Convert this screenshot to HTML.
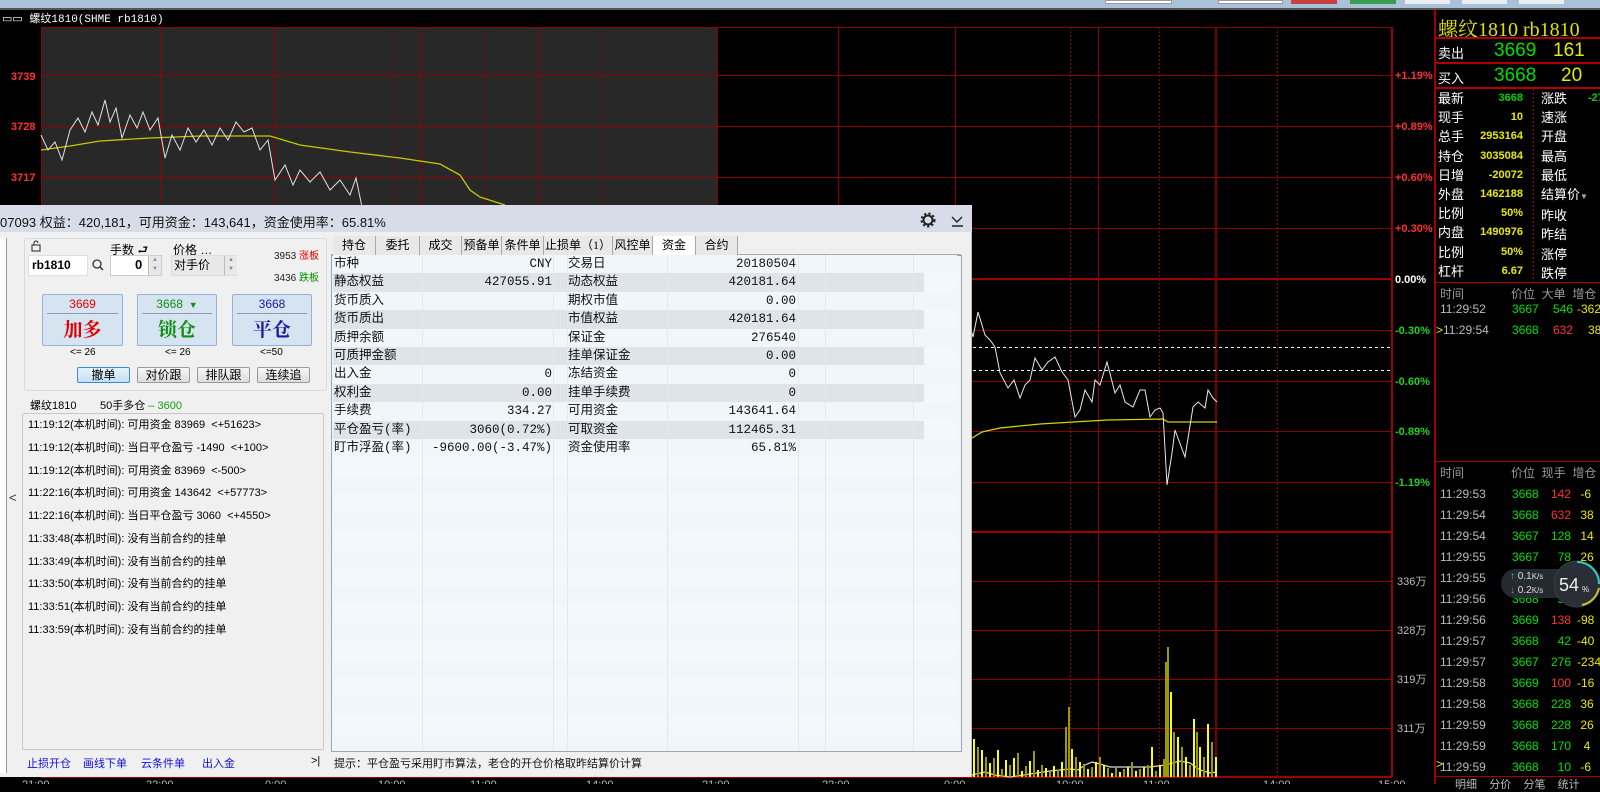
<!DOCTYPE html>
<html><head><meta charset="utf-8">
<style>
*{margin:0;padding:0;box-sizing:border-box}
body{width:1600px;height:784px;overflow:hidden;background:#000;position:relative;font-family:"Liberation Sans","Noto Sans CJK SC",sans-serif;font-size:12px}
.a{position:absolute;white-space:nowrap}
.rp{color:#fff;font-size:13px}
.btn{position:absolute;background:#d6e3f1;border:1px solid #8fb4da;border-radius:2px;text-align:center}
.btn .p{font-size:12px;height:19px;line-height:19px;border-bottom:1px solid #8a9bb0;margin:0 4px}
.btn .t{font-size:19px;line-height:30px;font-weight:bold;font-family:"Noto Serif CJK SC","Liberation Serif",serif}
.sb{position:absolute;top:367px;height:16px;border:1px solid #9a9a9a;border-radius:2px;background:linear-gradient(#f6f6f6,#dcdcdc);font-size:12px;text-align:center;line-height:14px;width:53px}
.log{position:absolute;left:28px;font-size:11px;color:#000}
.tab{position:absolute;top:236px;height:19px;border-right:1px solid #a9a9a9;background:#e8e8e8;font-size:12px;text-align:center;line-height:19px;font-family:"Liberation Serif","Noto Sans CJK SC",serif}
.row{position:absolute;left:333px;width:624px;height:18.4px}
.row span{position:absolute;top:0;line-height:18px;font-size:12.5px;font-family:"Liberation Mono","Noto Sans CJK SC",monospace;color:#111}
.tr{position:absolute;font-size:12px;font-family:"Liberation Sans",sans-serif}
</style></head><body>
<div class="a" style="left:0;top:0;width:1600px;height:8px;background:#a9c1d9"></div>
<div class="a" style="left:1105px;top:0;width:67px;height:4px;background:#fff;border:1px solid #999"></div>
<div class="a" style="left:1218px;top:0;width:65px;height:4px;background:#fff;border:1px solid #999"></div>
<div class="a" style="left:1291px;top:0;width:46px;height:4px;background:#c84040"></div>
<div class="a" style="left:1350px;top:0;width:46px;height:4px;background:#3a9a50"></div>
<div class="a" style="left:1405px;top:0;width:45px;height:4px;background:#e8eef4"></div>
<div class="a" style="left:1462px;top:0;width:45px;height:4px;background:#e8eef4"></div>
<div class="a" style="left:1519px;top:0;width:45px;height:4px;background:#e8eef4"></div>
<div class="a" style="left:0;top:8px;width:1600px;height:2px;background:#555"></div>
<div class="a" style="left:2px;top:10px;color:#fff;font-size:11px;font-family:'Liberation Mono','Noto Sans CJK SC',monospace">▭▭ 螺纹1810(SHME rb1810)</div>

<svg class="a" style="left:0;top:0" width="1600" height="784">
<rect x="41" y="27" width="676" height="180" fill="#282828"/>
<g stroke="#8b0000" stroke-width="1">
<line x1="41" y1="27.5" x2="1392" y2="27.5"/>
<line x1="41" y1="75.5" x2="1392" y2="75.5"/>
<line x1="41" y1="126.5" x2="1392" y2="126.5"/>
<line x1="41" y1="177.5" x2="1392" y2="177.5"/>
<line x1="41" y1="228.5" x2="1392" y2="228.5"/>
<line x1="41" y1="330.5" x2="1392" y2="330.5"/>
<line x1="41" y1="381.5" x2="1392" y2="381.5"/>
<line x1="41" y1="431.5" x2="1392" y2="431.5"/>
<line x1="41" y1="482.5" x2="1392" y2="482.5"/>
<line x1="41" y1="581.5" x2="1392" y2="581.5"/>
<line x1="41" y1="630.5" x2="1392" y2="630.5"/>
<line x1="41" y1="679.5" x2="1392" y2="679.5"/>
<line x1="41" y1="728.5" x2="1392" y2="728.5"/>
</g>
<g stroke="#a00000" stroke-width="2">
<line x1="41" y1="279" x2="1392" y2="279"/>
<line x1="41" y1="532" x2="1392" y2="532"/>
<line x1="41" y1="777" x2="1392" y2="777"/>
<line x1="1392" y1="27" x2="1392" y2="777"/>
</g>
<g stroke="#8b0000" stroke-width="1">
<line x1="41.5" y1="27" x2="41.5" y2="777"/>
<line x1="160.5" y1="27" x2="160.5" y2="777"/>
<line x1="275.5" y1="27" x2="275.5" y2="777"/>
<line x1="420.5" y1="27" x2="420.5" y2="777"/>
<line x1="538.5" y1="27" x2="538.5" y2="777"/>
<line x1="717.5" y1="27" x2="717.5" y2="777"/>
<line x1="838.5" y1="27" x2="838.5" y2="777"/>
<line x1="955.5" y1="27" x2="955.5" y2="777"/>
<line x1="1098.5" y1="27" x2="1098.5" y2="777"/>
</g>
<line x1="1216" y1="27" x2="1216" y2="777" stroke="#7a0000" stroke-width="2"/>
<g stroke="#8b0000" stroke-width="1" stroke-dasharray="2,2">
<line x1="392.5" y1="27" x2="392.5" y2="777"/>
<line x1="484.5" y1="27" x2="484.5" y2="777"/>
<line x1="600.5" y1="27" x2="600.5" y2="777"/>
<line x1="1070.5" y1="27" x2="1070.5" y2="777"/>
<line x1="1159.5" y1="27" x2="1159.5" y2="777"/>
<line x1="1277.5" y1="27" x2="1277.5" y2="777"/>
</g>
<g stroke="#fff" stroke-width="1" stroke-dasharray="3,3">
<line x1="955" y1="347.5" x2="1392" y2="347.5"/>
<line x1="955" y1="370.5" x2="1392" y2="370.5"/>
</g>
<polyline fill="none" stroke="#c8c800" stroke-width="1.3" points="41,150 70,146 100,141 150,138 200,136 270,136 300,145 350,152 400,158 440,164 460,175 470,190 480,197 505,205"/>
<polyline fill="none" stroke="#e0e0e0" stroke-width="1" points="41,135 48,150 55,142 62,160 70,130 78,118 85,132 92,112 98,125 105,100 110,122 116,108 122,138 130,115 137,128 143,112 150,130 158,118 165,158 172,135 180,150 188,128 196,142 204,130 212,145 220,128 228,140 236,122 244,132 252,128 260,150 268,140 275,180 285,165 293,185 300,170 310,182 320,172 330,190 340,180 350,195 356,178 362,207"/>
<polyline fill="none" stroke="#d4d400" stroke-width="1.3" points="955,430 972,438 982,432 1000,428 1040,424 1107,420 1163,419 1168,422 1217,422"/>
<polyline fill="none" stroke="#e8e8e8" stroke-width="1" points="955,306 962,300 968,318 973,337 978,312 985,335 990,340 995,347 1000,373 1008,388 1014,380 1020,398 1025,385 1030,380 1035,358 1042,370 1048,362 1055,357 1062,372 1068,380 1075,417 1080,410 1085,390 1092,402 1095,380 1100,385 1107,362 1115,393 1120,385 1125,402 1133,407 1140,390 1145,390 1150,417 1155,410 1160,408 1163,413 1167,485 1172,453 1175,430 1185,457 1193,407 1198,402 1205,408 1208,390 1213,398 1217,402"/>
<polyline fill="none" stroke="#ddd" stroke-width="1.2" points="955,775 972,775 985,772 995,775 1010,777 1030,774 1050,771 1070,769 1078,770 1085,765 1092,762 1100,764 1110,767 1130,767 1150,767 1165,765 1180,761 1190,763 1200,770 1210,773 1217,772"/>
<g font-family="Liberation Sans" font-size="11" fill="#ff3030" font-weight="bold">
<text x="11" y="80">3739</text><text x="11" y="130">3728</text><text x="11" y="181">3717</text>
</g>
<g font-family="Liberation Sans" font-size="11" font-weight="bold">
<text x="1395" y="79" fill="#ff3030">+1.19%</text>
<text x="1395" y="130" fill="#ff3030">+0.89%</text>
<text x="1395" y="181" fill="#ff3030">+0.60%</text>
<text x="1395" y="232" fill="#ff3030">+0.30%</text>
<text x="1395" y="283" fill="#fff">0.00%</text>
<text x="1395" y="334" fill="#20d020">-0.30%</text>
<text x="1395" y="385" fill="#20d020">-0.60%</text>
<text x="1395" y="435" fill="#20d020">-0.89%</text>
<text x="1395" y="486" fill="#20d020">-1.19%</text>
</g>
<g font-family="Liberation Sans,Noto Sans CJK SC" font-size="11" fill="#bbb">
<text x="1397" y="585">336万</text><text x="1397" y="634">328万</text><text x="1397" y="683">319万</text><text x="1397" y="732">311万</text>
</g>
<g font-family="Liberation Sans" font-size="11" fill="#bbb">
<text x="22" y="788">21:00</text><text x="146" y="788">22:00</text><text x="265" y="788">0:00</text><text x="378" y="788">10:00</text><text x="470" y="788">11:00</text><text x="586" y="788">14:00</text><text x="702" y="788">21:00</text><text x="822" y="788">22:00</text><text x="944" y="788">0:00</text><text x="1056" y="788">10:00</text><text x="1143" y="788">11:00</text><text x="1263" y="788">14:00</text><text x="1378" y="788">15:00</text>
</g>
</svg>

<svg class="a" style="left:0;top:0" width="1600" height="784">
<g fill="#ffff00">
<rect x="973" y="739" width="2" height="38"/><rect x="981" y="750" width="2" height="27"/><rect x="989" y="763" width="2" height="14"/><rect x="997" y="750" width="2" height="27"/><rect x="1005" y="760" width="2" height="17"/><rect x="1013" y="758" width="2" height="19"/><rect x="1021" y="771" width="2" height="6"/><rect x="1029" y="761" width="2" height="16"/><rect x="1037" y="770" width="2" height="7"/><rect x="1045" y="768" width="2" height="9"/><rect x="1053" y="766" width="2" height="11"/><rect x="1061" y="762" width="2" height="15"/><rect x="1071" y="749" width="2" height="28"/><rect x="1079" y="762" width="2" height="15"/><rect x="1087" y="769" width="2" height="8"/><rect x="1095" y="762" width="2" height="15"/><rect x="1103" y="765" width="2" height="12"/><rect x="1111" y="773" width="2" height="4"/><rect x="1119" y="772" width="2" height="5"/><rect x="1127" y="767" width="2" height="10"/><rect x="1135" y="771" width="2" height="6"/><rect x="1143" y="767" width="2" height="10"/><rect x="1151" y="747" width="2" height="30"/><rect x="1159" y="765" width="2" height="12"/><rect x="1170" y="692" width="2" height="85"/><rect x="1177" y="737" width="2" height="40"/><rect x="1185" y="757" width="2" height="20"/><rect x="1193" y="719" width="2" height="58"/><rect x="1199" y="747" width="2" height="30"/><rect x="1207" y="724" width="2" height="53"/><rect x="1215" y="757" width="2" height="20"/>
</g>
<g fill="#9a9a00">
<rect x="977" y="747" width="2" height="30"/><rect x="985" y="757" width="2" height="20"/><rect x="993" y="758" width="2" height="19"/><rect x="1001" y="769" width="2" height="8"/><rect x="1009" y="765" width="2" height="12"/><rect x="1017" y="753" width="2" height="24"/><rect x="1025" y="766" width="2" height="11"/><rect x="1033" y="751" width="2" height="26"/><rect x="1041" y="765" width="2" height="12"/><rect x="1049" y="772" width="2" height="5"/><rect x="1057" y="770" width="2" height="7"/><rect x="1065" y="727" width="2" height="50"/><rect x="1068" y="707" width="2" height="70"/><rect x="1075" y="757" width="2" height="20"/><rect x="1083" y="764" width="2" height="13"/><rect x="1091" y="767" width="2" height="10"/><rect x="1099" y="757" width="2" height="20"/><rect x="1107" y="768" width="2" height="9"/><rect x="1115" y="768" width="2" height="9"/><rect x="1123" y="769" width="2" height="8"/><rect x="1131" y="762" width="2" height="15"/><rect x="1139" y="769" width="2" height="8"/><rect x="1147" y="765" width="2" height="12"/><rect x="1155" y="771" width="2" height="6"/><rect x="1163" y="759" width="2" height="18"/><rect x="1165" y="662" width="2" height="115"/><rect x="1167" y="647" width="2" height="130"/><rect x="1173" y="732" width="2" height="45"/><rect x="1181" y="747" width="2" height="30"/><rect x="1189" y="765" width="2" height="12"/><rect x="1196" y="732" width="2" height="45"/><rect x="1203" y="757" width="2" height="20"/><rect x="1211" y="742" width="2" height="35"/>
</g>
</svg>

<div class="a" style="left:0;top:205px;width:972px;height:572px;background:#f0f0f0;border-right:1px solid #bbb"></div>
<div class="a" style="left:0;top:205px;width:972px;height:27px;background:#d8dce8"></div>
<div class="a" style="left:0;top:212px;font-size:13px;color:#111">07093 权益：420,181，可用资金：143,641，资金使用率：65.81%</div>
<svg class="a" style="left:919px;top:211px" width="50" height="18"><circle cx="9" cy="9" r="4.5" fill="none" stroke="#222" stroke-width="2"/><circle cx="9" cy="9" r="6.5" fill="none" stroke="#222" stroke-width="2" stroke-dasharray="2.2,2.2"/><path d="M33 6 L38 11 L43 6 M33 15 H44" fill="none" stroke="#222" stroke-width="1.4"/></svg>
<div class="a" style="left:0;top:238px;width:7px;height:535px;background:#fff;border-right:1px solid #999"></div>
<div class="a" style="left:9px;top:490px;font-size:13px;color:#333">&lt;</div>
<div class="a" style="left:24px;top:238px;width:303px;height:153px;border:1px solid #d4dae2;border-radius:3px"></div>
<svg class="a" style="left:31px;top:240px" width="12" height="12"><rect x="1" y="5" width="8" height="6" fill="none" stroke="#222"/><path d="M3 5V3a2 2 0 0 1 4 0" fill="none" stroke="#222"/></svg>
<div class="a" style="left:110px;top:241px;font-size:12px">手数 ⮐</div>
<div class="a" style="left:173px;top:241px;font-size:12px">价格 …</div>
<div class="a" style="left:274px;top:247px;font-size:10px;color:#222">3953 <span style="color:#e00000">涨板</span></div>
<div class="a" style="left:274px;top:269px;font-size:10px;color:#222">3436 <span style="color:#009000">跌板</span></div>
<div class="a" style="left:28px;top:255px;width:60px;height:21px;background:#fff;border:1px solid #e0e0e0;font-size:12px;font-weight:bold;line-height:19px;padding-left:3px">rb1810</div>
<svg class="a" style="left:92px;top:258px" width="12" height="14"><circle cx="5" cy="6" r="4" fill="none" stroke="#333" stroke-width="1.3"/><path d="M8 9l3 3" stroke="#333" stroke-width="1.5"/></svg>
<div class="a" style="left:110px;top:255px;width:52px;height:21px;background:#fff;border:1px solid #ccc"></div>
<div class="a" style="left:135px;top:257px;font-size:13px;font-weight:bold">0</div>
<div class="a" style="left:148px;top:256px;width:13px;height:19px;background:#e8e8e8;border-left:1px solid #bbb;font-size:6px;color:#88a;text-align:center;line-height:9px">▲<br>▼</div>
<div class="a" style="left:171px;top:255px;width:66px;height:21px;background:#e8e8e8;border:1px solid #ddd;font-size:12px;padding-left:2px">对手价</div>
<div class="a" style="left:224px;top:256px;width:13px;height:19px;background:#e8e8e8;border-left:1px solid #bbb;font-size:6px;color:#88a;text-align:center;line-height:9px">▲<br>▼</div>
<div class="btn" style="left:42px;top:294px;width:81px;height:52px"><div class="p" style="color:#e00000">3669</div><div class="t" style="color:#e00000">加多</div></div>
<div class="btn" style="left:137px;top:294px;width:80px;height:52px"><div class="p" style="color:#109010">3668 <span style="font-size:9px">&nbsp;▼</span></div><div class="t" style="color:#109010">锁仓</div></div>
<div class="btn" style="left:232px;top:294px;width:80px;height:52px"><div class="p" style="color:#1a1aa0">3668</div><div class="t" style="color:#1a1aa0">平仓</div></div>
<div class="a" style="left:70px;top:347px;font-size:10px">&lt;= 26</div>
<div class="a" style="left:165px;top:347px;font-size:10px">&lt;= 26</div>
<div class="a" style="left:260px;top:347px;font-size:10px">&lt;=50</div>
<div class="sb" style="left:77px;border-color:#3c8ad8;background:linear-gradient(#e6f2fc,#c4e0f6)">撤单</div>
<div class="sb" style="left:137px">对价跟</div>
<div class="sb" style="left:197px">排队跟</div>
<div class="sb" style="left:257px">连续追</div>
<div class="a" style="left:30px;top:397px;font-size:11px">螺纹1810</div>
<div class="a" style="left:100px;top:397px;font-size:11px">50手多仓 <span style="color:#10a010">– 3600</span></div>
<div class="a" style="left:22px;top:413px;width:302px;height:337px;border:1px solid #c8c8c8;border-radius:2px"></div>
<div class="log" style="top:416px">11:19:12(本机时间): 可用资金 83969 &nbsp;&lt;+51623&gt;</div>
<div class="log" style="top:439px">11:19:12(本机时间): 当日平仓盈亏 -1490 &nbsp;&lt;+100&gt;</div>
<div class="log" style="top:462px">11:19:12(本机时间): 可用资金 83969 &nbsp;&lt;-500&gt;</div>
<div class="log" style="top:484px">11:22:16(本机时间): 可用资金 143642 &nbsp;&lt;+57773&gt;</div>
<div class="log" style="top:507px">11:22:16(本机时间): 当日平仓盈亏 3060 &nbsp;&lt;+4550&gt;</div>
<div class="log" style="top:530px">11:33:48(本机时间): 没有当前合约的挂单</div>
<div class="log" style="top:553px">11:33:49(本机时间): 没有当前合约的挂单</div>
<div class="log" style="top:575px">11:33:50(本机时间): 没有当前合约的挂单</div>
<div class="log" style="top:598px">11:33:51(本机时间): 没有当前合约的挂单</div>
<div class="log" style="top:621px">11:33:59(本机时间): 没有当前合约的挂单</div>
<div class="a" style="left:27px;top:755px;font-size:11px;color:#1010e0">止损开仓</div>
<div class="a" style="left:83px;top:755px;font-size:11px;color:#1010e0">画线下单</div>
<div class="a" style="left:141px;top:755px;font-size:11px;color:#1010e0">云条件单</div>
<div class="a" style="left:202px;top:755px;font-size:11px;color:#1010e0">出入金</div>
<div class="a" style="left:311px;top:755px;font-size:11px">&gt;|</div>
<div class="a" style="left:331px;top:235px;width:630px;height:20px;border-bottom:1px solid #aaa"></div>
<div class="tab" style="left:333px;width:43px">持仓</div>
<div class="tab" style="left:376px;width:44px">委托</div>
<div class="tab" style="left:420px;width:42px">成交</div>
<div class="tab" style="left:462px;width:40px">预备单</div>
<div class="tab" style="left:502px;width:42px">条件单</div>
<div class="tab" style="left:544px;width:69px">止损单（1）</div>
<div class="tab" style="left:613px;width:40px">风控单</div>
<div class="tab" style="left:653px;width:43px;background:#fff">资金</div>
<div class="tab" style="left:696px;width:42px">合约</div>
<div class="a" style="left:331px;top:255px;width:631px;height:497px;background:#f0f6fc;border:1px solid #9aa"></div>
<div class="a" style="left:333px;top:255px;width:624px;height:495px;background:repeating-linear-gradient(#f0f6fc 0 18.4px,#f3f8fd 18.4px 36.8px)"></div>
<div class="a" style="left:333px;top:273.4px;width:591px;height:18.4px;background:#dfe3ea"></div>
<div class="a" style="left:333px;top:310.2px;width:591px;height:18.4px;background:#dfe3ea"></div>
<div class="a" style="left:333px;top:347px;width:591px;height:18.4px;background:#dfe3ea"></div>
<div class="a" style="left:333px;top:383.8px;width:591px;height:18.4px;background:#dfe3ea"></div>
<div class="a" style="left:333px;top:420.6px;width:591px;height:18.4px;background:#dfe3ea"></div>
<svg class="a" style="left:333px;top:255px" width="624" height="495"><g stroke="#e2e8ee"><line x1="89.5" y1="0" x2="89.5" y2="495"/><line x1="220.5" y1="0" x2="220.5" y2="495"/><line x1="234.5" y1="0" x2="234.5" y2="495"/><line x1="334.5" y1="0" x2="334.5" y2="495"/><line x1="465.5" y1="0" x2="465.5" y2="495"/><line x1="492.5" y1="0" x2="492.5" y2="495"/><line x1="580.5" y1="0" x2="580.5" y2="495"/></g></svg>
<div class="row" style="top:255px"><span style="left:1px">市种</span><span style="left:0;width:219px;text-align:right">CNY</span><span style="left:235px">交易日</span><span style="left:0;width:463px;text-align:right">20180504</span></div>
<div class="row" style="top:273.4px"><span style="left:1px">静态权益</span><span style="left:0;width:219px;text-align:right">427055.91</span><span style="left:235px">动态权益</span><span style="left:0;width:463px;text-align:right">420181.64</span></div>
<div class="row" style="top:291.8px"><span style="left:1px">货币质入</span><span style="left:235px">期权市值</span><span style="left:0;width:463px;text-align:right">0.00</span></div>
<div class="row" style="top:310.2px"><span style="left:1px">货币质出</span><span style="left:235px">市值权益</span><span style="left:0;width:463px;text-align:right">420181.64</span></div>
<div class="row" style="top:328.6px"><span style="left:1px">质押余额</span><span style="left:235px">保证金</span><span style="left:0;width:463px;text-align:right">276540</span></div>
<div class="row" style="top:347px"><span style="left:1px">可质押金额</span><span style="left:235px">挂单保证金</span><span style="left:0;width:463px;text-align:right">0.00</span></div>
<div class="row" style="top:365.4px"><span style="left:1px">出入金</span><span style="left:0;width:219px;text-align:right">0</span><span style="left:235px">冻结资金</span><span style="left:0;width:463px;text-align:right">0</span></div>
<div class="row" style="top:383.8px"><span style="left:1px">权利金</span><span style="left:0;width:219px;text-align:right">0.00</span><span style="left:235px">挂单手续费</span><span style="left:0;width:463px;text-align:right">0</span></div>
<div class="row" style="top:402.2px"><span style="left:1px">手续费</span><span style="left:0;width:219px;text-align:right">334.27</span><span style="left:235px">可用资金</span><span style="left:0;width:463px;text-align:right">143641.64</span></div>
<div class="row" style="top:420.6px"><span style="left:1px">平仓盈亏(率)</span><span style="left:0;width:219px;text-align:right">3060(0.72%)</span><span style="left:235px">可取资金</span><span style="left:0;width:463px;text-align:right">112465.31</span></div>
<div class="row" style="top:439px"><span style="left:1px">盯市浮盈(率)</span><span style="left:0;width:219px;text-align:right">-9600.00(-3.47%)</span><span style="left:235px">资金使用率</span><span style="left:0;width:463px;text-align:right">65.81%</span></div>
<div class="a" style="left:334px;top:755px;font-size:11px;color:#111">提示：平仓盈亏采用盯市算法，老仓的开仓价格取昨结算价计算</div>

<div class="a" style="left:1434px;top:10px;width:2px;height:774px;background:#a00000"></div>
<div class="a" style="left:1438px;top:13px;font-size:20px;color:#e0e000;font-family:'Liberation Serif','Noto Serif CJK SC',serif">螺纹1810 rb1810</div>
<div class="a" style="left:1436px;top:37px;width:164px;height:2px;background:#b00000"></div>
<div class="a" style="left:1436px;top:62px;width:164px;height:2px;background:#b00000"></div>
<div class="a" style="left:1436px;top:87px;width:164px;height:2px;background:#b00000"></div>
<div class="a rp" style="left:1438px;top:43px;font-size:13px">卖出</div>
<div class="a" style="left:1494px;top:40px;font-size:19px;color:#00e000">3669</div>
<div class="a" style="left:1553px;top:40px;font-size:19px;color:#e8e800">161</div>
<div class="a rp" style="left:1438px;top:68px;font-size:13px">买入</div>
<div class="a" style="left:1494px;top:65px;font-size:19px;color:#00e000">3668</div>
<div class="a" style="left:1561px;top:65px;font-size:19px;color:#e8e800">20</div>
<svg class="a" style="left:1532px;top:89px" width="3" height="194"><line x1="1.5" y1="0" x2="1.5" y2="194" stroke="#a00000" stroke-dasharray="2,2"/></svg>
<div class="a" style="left:1438px;top:89px;line-height:19.2px;font-size:13px;color:#fff">最新<br>现手<br>总手<br>持仓<br>日增<br>外盘<br>比例<br>内盘<br>比例<br>杠杆</div>
<div class="a" style="left:1441px;width:82px;top:89px;line-height:19.2px;font-size:11px;font-weight:bold;text-align:right;color:#e8e800"><span style="color:#00d000">3668</span><br>10<br>2953164<br>3035084<br>-20072<br>1462188<br>50%<br>1490976<br>50%<br>6.67</div>
<div class="a" style="left:1541px;top:89px;line-height:19.2px;font-size:13px;color:#fff">涨跌<br>速涨<br>开盘<br>最高<br>最低<br>结算价<span style="font-size:8px;color:#aaa">▼</span><br>昨收<br>昨结<br>涨停<br>跌停</div>
<div class="a" style="left:1588px;top:92px;font-size:11px;font-weight:bold;color:#00d000">-27</div>
<div class="a" style="left:1436px;top:282px;width:164px;height:1px;background:#b00000"></div>
<div class="a" style="left:1436px;top:461px;width:164px;height:1px;background:#b00000"></div>
<div class="a" style="left:1440px;top:285px;font-size:12px;color:#999">时间</div>
<div class="a" style="left:1511px;top:285px;font-size:12px;color:#999">价位 &nbsp;大单 &nbsp;增仓</div>
<div class="a" style="left:1440px;top:464px;font-size:12px;color:#999">时间</div>
<div class="a" style="left:1511px;top:464px;font-size:12px;color:#999">价位 &nbsp;现手 &nbsp;增仓</div>
<div class="tr" style="left:1440px;top:302px;color:#bbb">11:29:52</div><div class="tr" style="left:1512px;top:302px;color:#00e000">3667</div><div class="tr" style="left:1553px;top:302px;color:#00e000">546</div><div class="tr" style="left:1577px;top:302px;color:#e8e800">-362</div>
<div class="tr" style="left:1436px;top:323px;color:#bbb"><span style="color:#e8e800">&gt;</span>11:29:54</div><div class="tr" style="left:1512px;top:323px;color:#00e000">3668</div><div class="tr" style="left:1553px;top:323px;color:#ff3030">632</div><div class="tr" style="left:1588px;top:323px;color:#e8e800">38</div>
<div class="a" style="left:1440px;top:484px;line-height:21px;font-size:12px;color:#bbb">11:29:53<br>11:29:54<br>11:29:54<br>11:29:55<br>11:29:55<br>11:29:56<br>11:29:56<br>11:29:57<br>11:29:57<br>11:29:58<br>11:29:58<br>11:29:59<br>11:29:59<br>11:29:59</div>
<div class="a" style="left:1512px;top:484px;line-height:21px;font-size:12px;color:#00e000">3668<br>3668<br>3667<br>3667<br>3668<br>3668<br>3669<br>3668<br>3667<br>3669<br>3668<br>3668<br>3668<br>3668</div>
<div class="a" style="left:1540px;width:31px;text-align:right;top:484px;line-height:21px;font-size:12px;color:#00e000"><span style="color:#ff3030">142</span><br><span style="color:#ff3030">632</span><br>128<br>78<br>60<br>52<br><span style="color:#ff3030">138</span><br>42<br>276<br><span style="color:#ff3030">100</span><br>228<br>228<br>170<br>10</div>
<div class="a" style="left:1577px;top:484px;line-height:21px;font-size:12px;color:#e8e800">&nbsp;-6<br>&nbsp;38<br>&nbsp;14<br>&nbsp;26<br>-50<br>&nbsp;<br>-98<br>-40<br>-234<br>-16<br>&nbsp;36<br>&nbsp;26<br>&nbsp;&nbsp;4<br>&nbsp;-6</div>
<div class="a" style="left:1436px;top:757px;color:#e8e800;font-size:12px">&gt;</div>
<div class="a" style="left:1436px;top:776px;width:164px;height:8px;border-top:1px solid #a00000"></div>
<div class="a" style="left:1455px;top:776px;font-size:11px;color:#bbb">明细 &nbsp;&nbsp; 分价 &nbsp;&nbsp; 分笔 &nbsp;&nbsp; 统计</div>
<div class="a" style="left:1501px;top:569px;width:99px;height:29px;border-radius:15px;background:rgba(40,44,52,0.92)"></div>
<div class="a" style="left:1510px;top:571px;font-size:10px;color:#ddd"><span style="color:#4ab0e0">↑</span> 0.1<span style="font-size:8px">K/s</span></div>
<div class="a" style="left:1510px;top:585px;font-size:10px;color:#ddd"><span style="color:#40c040">↓</span> 0.2<span style="font-size:8px">K/s</span></div>
<svg class="a" style="left:1552px;top:558px" width="48" height="52"><circle cx="25" cy="26" r="23" fill="#2a2e36" stroke="#3a3e46"/><path d="M25 4 A22 22 0 0 1 47 26" fill="none" stroke="#30c8c0" stroke-width="2"/><path d="M47 30 A22 22 0 0 1 30 47" fill="none" stroke="#c8c030" stroke-width="2"/><text x="7" y="33" font-family="Liberation Sans" font-size="18" fill="#eee">54</text><text x="30" y="34" font-family="Liberation Sans" font-size="8" fill="#eee">%</text></svg>
</body></html>
